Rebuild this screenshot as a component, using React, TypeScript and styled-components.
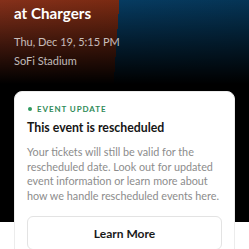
import styled, { createGlobalStyle } from "styled-components";

const GlobalStyle = createGlobalStyle`
  html, body {
    margin: 0;
    padding: 0;
    background: #ffffff;
  }
  body {
    font-family: Lato, "Liberation Sans", Arial, sans-serif;
    -webkit-font-smoothing: antialiased;
  }
`;

const Page = styled.div`
  width: 249px;
  height: 249px;
  overflow: hidden;
  background: linear-gradient(#000 0, #000 222px, #fff 222px);
`;

const Hero = styled.header`
  height: 91px;
  box-sizing: border-box;
  padding: 3px 14px 0;
  background:
    linear-gradient(to bottom, rgba(0, 0, 0, 0) 0, rgba(0, 0, 0, 0.55) 45px, #000 84px),
    linear-gradient(94deg, #85301a 0, #7a2a12 46.8%, #063b61 46.8%, #053455 100%);
`;

const Title = styled.h1`
  margin: 0;
  font-size: 15.2px;
  line-height: 20px;
  font-weight: 700;
  color: #ffffff;
`;

const Meta = styled.div`
  font-size: 11px;
  line-height: 19px;
  color: rgba(255, 255, 255, 0.72);
  margin-top: ${(p: { $gap?: number }) => p.$gap ?? 0}px;
`;

const Card = styled.section`
  margin: 0 14px;
  background: #ffffff;
  border: 1px solid #ececec;
  border-radius: 8px;
  padding: 11px 12px 16px;
`;

const LabelRow = styled.div`
  display: flex;
  align-items: center;
  gap: 5px;
  padding-left: 1px;
`;

const Dot = styled.span`
  width: 4px;
  height: 4px;
  border-radius: 50%;
  background: #2f9a60;
`;

const Label = styled.span`
  font-size: 8px;
  line-height: 12px;
  font-weight: 700;
  letter-spacing: 0.9px;
  color: #2f8b58;
  text-transform: uppercase;
`;

const CardTitle = styled.h2`
  margin: 4px 0 0;
  font-size: 12.3px;
  line-height: 17px;
  font-weight: 700;
  color: #161616;
`;

const Body = styled.p`
  margin: 9px 0 0;
  font-size: 10.8px;
  line-height: 14.5px;
  color: #8c8c8c;
  white-space: nowrap;
`;

const Button = styled.button`
  display: flex;
  align-items: center;
  justify-content: center;
  width: 100%;
  height: 34px;
  margin-top: 13px;
  background: #ffffff;
  border: 1px solid #e3e3e3;
  border-radius: 6px;
  font-family: inherit;
  font-size: 12px;
  font-weight: 700;
  color: #1a1a1a;
`;

export default function App() {
  return (
    <>
      <GlobalStyle />
      <Page>
        <Hero>
          <Title>at Chargers</Title>
          <Meta $gap={9}>Thu, Dec 19, 5:15 PM</Meta>
          <Meta>SoFi Stadium</Meta>
        </Hero>
        <Card>
          <LabelRow>
            <Dot />
            <Label>Event Update</Label>
          </LabelRow>
          <CardTitle>This event is rescheduled</CardTitle>
          <Body>
            Your tickets will still be valid for the
            <br />
            rescheduled date. Look out for updated
            <br />
            event information or learn more about
            <br />
            how we handle rescheduled events here.
          </Body>
          <Button>Learn More</Button>
        </Card>
      </Page>
    </>
  );
}
